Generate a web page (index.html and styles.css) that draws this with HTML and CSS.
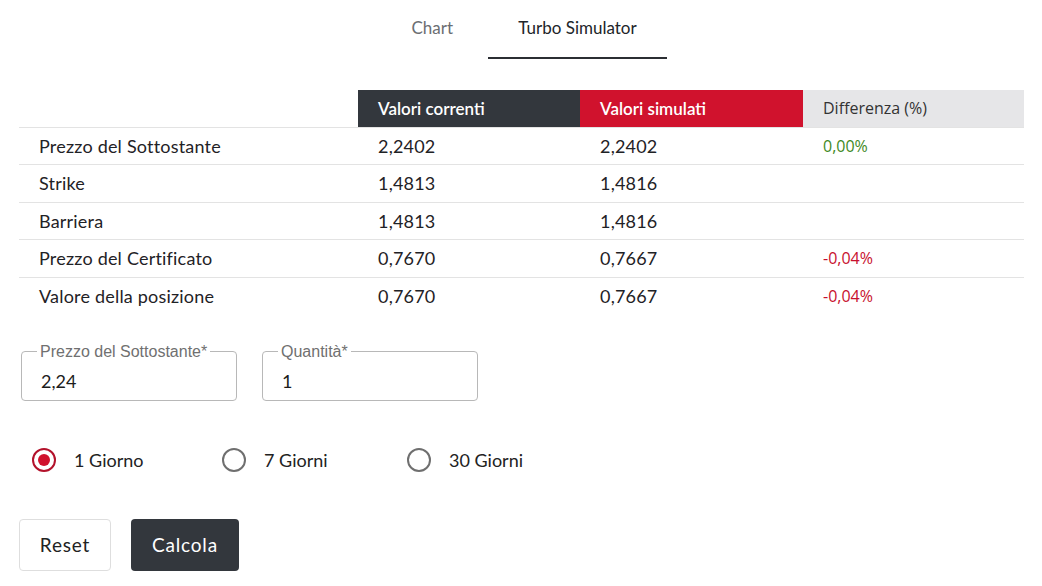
FILE: index.html
```html
<!DOCTYPE html>
<html lang="it">
<head>
<meta charset="utf-8">
<title>Turbo Simulator</title>
<link rel="stylesheet" href="styles.css">
</head>
<body>
<div class="page">
  <nav class="tabs">
    <div class="tab tab-chart">Chart</div>
    <div class="tab tab-active">Turbo Simulator</div>
  </nav>

  <table class="sim-table">
    <thead>
      <tr>
        <th class="col-label"></th>
        <th class="col-current">Valori correnti</th>
        <th class="col-sim">Valori simulati</th>
        <th class="col-diff">Differenza (%)</th>
      </tr>
    </thead>
    <tbody>
      <tr><td>Prezzo del Sottostante</td><td>2,2402</td><td>2,2402</td><td class="diff pos">0,00%</td></tr>
      <tr><td>Strike</td><td>1,4813</td><td>1,4816</td><td class="diff"></td></tr>
      <tr><td>Barriera</td><td>1,4813</td><td>1,4816</td><td class="diff"></td></tr>
      <tr><td>Prezzo del Certificato</td><td>0,7670</td><td>0,7667</td><td class="diff neg">-0,04%</td></tr>
      <tr><td>Valore della posizione</td><td>0,7670</td><td>0,7667</td><td class="diff neg">-0,04%</td></tr>
    </tbody>
  </table>

  <div class="fields">
    <fieldset class="field">
      <legend>Prezzo del Sottostante*</legend>
      <div class="field-value">2,24</div>
    </fieldset>
    <fieldset class="field">
      <legend>Quantità*</legend>
      <div class="field-value">1</div>
    </fieldset>
  </div>

  <div class="radios">
    <label class="radio radio-1"><span class="dot checked"></span>1 Giorno</label>
    <label class="radio radio-7"><span class="dot"></span>7 Giorni</label>
    <label class="radio radio-30"><span class="dot"></span>30 Giorni</label>
  </div>

  <div class="buttons">
    <button class="btn btn-reset">Reset</button>
    <button class="btn btn-calc">Calcola</button>
  </div>
</div>
</body>
</html>
```

FILE: styles.css
```css
* { box-sizing: border-box; }
html, body { margin: 0; background: #fff; }
body {
  font-family: "Source Sans Pro", Lato, "Liberation Sans", sans-serif;
  color: #212529;
  font-size: 17px;
}
.page { padding: 0 18px 0 19px; }

.tabs {
  display: flex;
  justify-content: center;
  height: 59px;
}
.tab {
  padding: 0 30px;
  min-width: 112px;
  text-align: center;
  line-height: 56px;
  font-size: 17px;
  color: #6b6e72;
  border-bottom: 2px solid transparent;
}
.tab-active {
  color: #212529;
  border-bottom-color: #2b2e33;
}

.sim-table {
  margin-top: 31px;
  width: 100%;
  border-collapse: collapse;
}
.sim-table th {
  height: 37px;
  text-align: left;
  font-weight: 600;
  padding: 0 20px;
  font-size: 17px;
  border-bottom: 1px solid #e3e3e3;
}
.col-label { width: 339px; }
.col-current { width: 222px; background: #33373d; color: #fff; }
.col-sim { width: 223px; background: #d0122d; color: #fff; }
.sim-table th.col-diff {
  background: #e6e6e8;
  color: #333;
  font-family: "Open Sans", sans-serif;
  font-weight: 400;
  font-size: 16px;
}
.sim-table td {
  height: 37.5px;
  padding: 0 20px;
  font-size: 18px;
  letter-spacing: 0.2px;
  color: #1f2226;
  border-bottom: 1px solid #e3e3e3;
}
.sim-table tbody tr:last-child td { border-bottom: none; }
.sim-table td.diff {
  font-family: "Open Sans", sans-serif;
  font-size: 16px;
  letter-spacing: 0;
}
.sim-table td.pos { color: #3f8a1f; }
.sim-table td.neg { color: #c8102e; }

.fields {
  display: flex;
  gap: 25px;
  margin-top: 28px;
  padding-left: 2px;
}
.field {
  margin: 0;
  width: 216px;
  height: 58px;
  padding: 0 19px;
  border: 1px solid #b8b8b8;
  border-radius: 4px;
}
.field legend {
  font-family: "Liberation Sans", Arial, sans-serif;
  font-size: 16px;
  line-height: 18px;
  color: #707070;
  padding: 0 3px;
  margin-left: -4px;
}
.field-value {
  font-size: 18px;
  line-height: 20px;
  margin-top: 10px;
  color: #1c1c1c;
}

.radios {
  display: flex;
  margin-top: 39px;
  padding-left: 13px;
  height: 40px;
  align-items: center;
}
.radio {
  display: flex;
  align-items: center;
  gap: 18px;
  font-size: 18px;
  color: #222;
}
.radio-1 { width: 190px; }
.radio-7 { width: 185px; }
.dot {
  width: 24px;
  height: 24px;
  border-radius: 50%;
  border: 2px solid #6f6f6f;
  display: inline-block;
  position: relative;
}
.dot.checked { border-color: #b3122b; }
.dot.checked::after {
  content: "";
  position: absolute;
  left: 4px;
  top: 4px;
  width: 12px;
  height: 12px;
  border-radius: 50%;
  background: #d0122d;
}

.buttons {
  display: flex;
  gap: 20px;
  margin-top: 39px;
}
.btn {
  height: 52px;
  border-radius: 4px;
  font-family: inherit;
  font-size: 19px;
  letter-spacing: 0.8px;
  cursor: pointer;
}
.btn-reset {
  width: 92px;
  background: #fff;
  border: 1px solid #dedede;
  color: #222;
}
.btn-calc {
  width: 108px;
  background: #33373d;
  border: none;
  color: #fff;
}
```
